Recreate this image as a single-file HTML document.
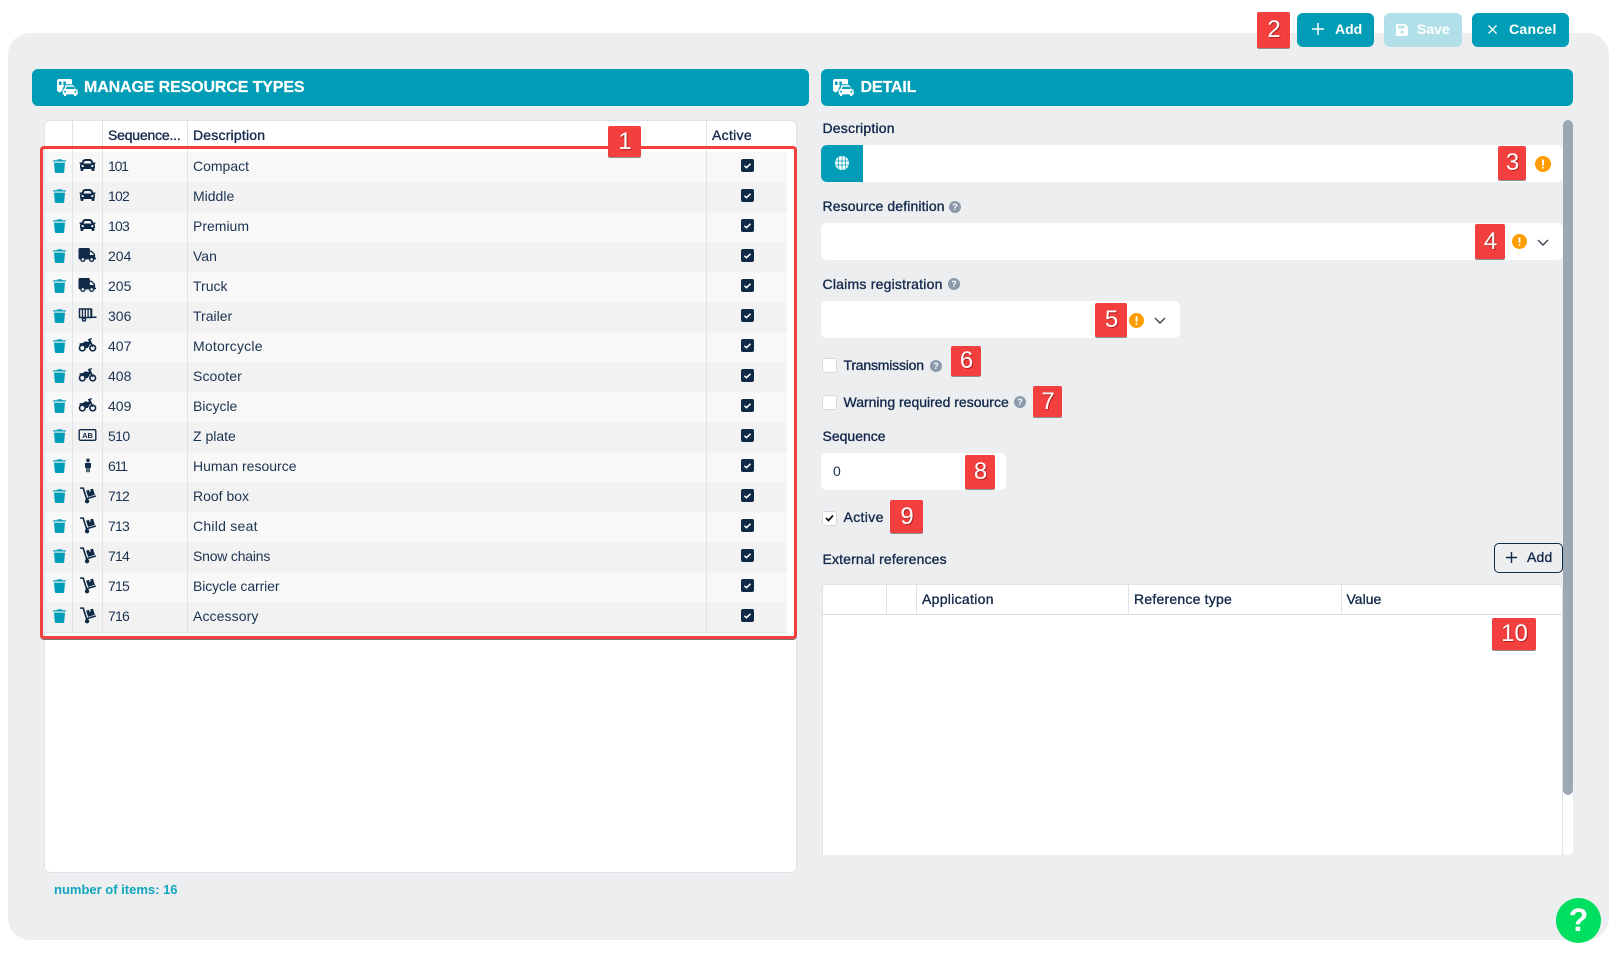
<!DOCTYPE html>
<html lang="en">
<head>
<meta charset="utf-8">
<title>Manage resource types</title>
<style>
*{box-sizing:border-box}
html,body{margin:0;padding:0;width:1618px;height:954px;overflow:hidden;background:#fff;font-family:"Liberation Sans",Arial,sans-serif;color:#13294b}
.a{position:absolute}
.panel{left:8px;top:33px;width:1601px;height:907px;background:#edeef0;border-radius:22px}
.hd{background:#019db7;border-radius:6px;top:69px;height:37px}
.ttl{color:#fff;font-weight:bold;font-size:16px;line-height:20px;top:78px;white-space:nowrap;letter-spacing:-.13px;-webkit-text-stroke:.2px #fff}
.tw{left:44px;top:120px;width:753px;height:753px;background:#fff;border:1px solid #e0e4e8;border-radius:6px}
.sep{width:1px;background:#dfe3e6}
.th{font-size:14px;line-height:20px;top:125px;-webkit-text-stroke:.35px #13294b;white-space:nowrap;color:#13294b}
.rows{left:45px;top:152px;width:742px;border-bottom:1px solid #dfe3e6}
.r{position:relative;height:30px;background:#f8f8f8;font-size:14px;line-height:30px;color:#1c3350}
.r:nth-child(even){background:#f2f2f3}
.r span{position:absolute;top:-1px;white-space:nowrap}
.r .s{left:63px}
.r .d{left:148px}
.r svg{position:absolute}
.r .tr{left:8.300px;top:7px;width:13px;height:14px;color:#049db8}
.r .ck{left:695.500px;top:6.500px;width:13px;height:13px}
.ic{left:34px;width:18px;height:18px;top:5px;color:#0f2a47;transform:translate(-.5px,-1px)}
.lb{font-size:14px;line-height:20px;-webkit-text-stroke:.35px #13294b;white-space:nowrap;color:#13294b}
.in{background:#fff;border-radius:6px}
.b{background:#f43f3f;color:#fff;font-size:24px;line-height:30px;text-align:center;border-radius:2px;box-shadow:0 1px 0 #8f8f8f;text-shadow:1px 1px 0 rgba(90,0,0,.45);display:flex;align-items:center;justify-content:center;padding-left:1px;z-index:5}
.btn{background:#019db7;border-radius:6px;top:13px;height:34px;color:#fff}
.bt{color:#fff;font-weight:bold;font-size:14px;line-height:20px;top:19px;white-space:nowrap}
.cb{width:15px;height:15px;background:#fff;border:1px solid #d5d9de;border-radius:3px;left:822px}
.redbox{left:40px;top:146px;width:757px;height:493px;border:3px solid #f43f3f;border-radius:4px;box-shadow:0 1px 0 #777;z-index:4}
</style>
</head>
<body>
<svg width="0" height="0" style="position:absolute">
<defs>
<symbol id="car" viewBox="0 0 512 512"><path fill="currentColor" d="M499.99 176h-59.87l-16.64-41.6C406.38 91.63 365.57 64 319.5 64h-127c-46.06 0-86.88 27.63-103.99 70.4L71.87 176H12.01C4.2 176-1.53 183.34.37 190.91l6 24C7.7 220.25 12.5 224 18.01 224h20.07C24.65 235.73 16 252.78 16 272v48c0 16.12 6.16 30.67 16 41.93V416c0 17.67 14.33 32 32 32h32c17.67 0 32-14.33 32-32v-32h256v32c0 17.67 14.33 32 32 32h32c17.67 0 32-14.33 32-32v-54.07c9.84-11.25 16-25.8 16-41.93v-48c0-19.22-8.65-36.27-22.07-48H494c5.51 0 10.31-3.75 11.64-9.09l6-24c1.89-7.57-3.84-14.91-11.65-14.91zm-352.06-17.83c7.29-18.22 24.94-30.17 44.57-30.17h127c19.63 0 37.28 11.95 44.57 30.17L384 208H128l19.93-49.83zM96 319.8c-19.2 0-32-12.76-32-31.9S76.8 256 96 256s48 28.71 48 47.85-28.8 15.95-48 15.95zm320 0c-19.2 0-48 3.19-48-15.95S396.8 256 416 256s32 12.76 32 31.9-12.8 31.9-32 31.9z"/></symbol>
<symbol id="truck" viewBox="0 0 640 512"><path fill="currentColor" d="M624 352h-16V243.9c0-12.7-5.1-24.9-14.1-33.9L494 110.1c-9-9-21.2-14.1-33.9-14.1H416V48c0-26.5-21.5-48-48-48H48C21.5 0 0 21.5 0 48v320c0 26.5 21.5 48 48 48h16c0 53 43 96 96 96s96-43 96-96h128c0 53 43 96 96 96s96-43 96-96h48c8.8 0 16-7.2 16-16v-32c0-8.8-7.2-16-16-16zM160 464c-26.5 0-48-21.5-48-48s21.5-48 48-48 48 21.5 48 48-21.5 48-48 48zm320 0c-26.5 0-48-21.5-48-48s21.5-48 48-48 48 21.5 48 48-21.5 48-48 48zm80-208H416V144h44.1l99.9 99.9V256z"/></symbol>
<symbol id="trash" viewBox="0 0 13 14"><path fill="currentColor" d="M4.5.3h4l.5.9h3.2c.4 0 .8.3.8.8v.5H0V2c0-.5.4-.8.8-.8H4zM1 3.6h11l-.8 9.3c-.1.6-.6 1.1-1.2 1.1H3c-.6 0-1.100-.5-1.200-1.100z"/></symbol>
<symbol id="trailer" viewBox="0 0 18 14"><path fill="none" stroke="currentColor" stroke-width="1.500" d="M1 1h11.500v8.500H1z"/><path stroke="currentColor" stroke-width="1.300" d="M4 1v8.500M6.800 1v8.500M9.600 1v8.500"/><path fill="currentColor" d="M12 8.500h6V10h-6zM12 1h1.800v8.500H12z"/><circle cx="5.500" cy="11.500" r="2.300" fill="currentColor"/><circle cx="5.500" cy="11.500" r=".8" fill="#f5f5f5"/></symbol>
<symbol id="moto" viewBox="0 0 18 14"><circle cx="3.800" cy="10" r="2.800" fill="none" stroke="currentColor" stroke-width="1.700"/><circle cx="14.200" cy="10" r="2.800" fill="none" stroke="currentColor" stroke-width="1.700"/><path fill="currentColor" d="M1 5.500l4-.7 1.500-1.400 4 .6L9.300 1h2.300l3.500 7.500-1.500.7-1.700-3.600-2.600 4.400H6.500L7 8 5 6.700 1.200 7.500z"/><path fill="currentColor" d="M10 1l3.200-1 .4 1.200-3.100.8z"/></symbol>
<symbol id="plate" viewBox="0 0 18 12"><rect x=".7" y=".7" width="16.600" height="10.600" rx="1.300" fill="none" stroke="currentColor" stroke-width="1.400"/><text x="9" y="8.800" font-family="Liberation Sans" font-size="7.500" font-weight="bold" text-anchor="middle" fill="currentColor">AB</text></symbol>
<symbol id="person" viewBox="0 0 8 16"><circle cx="4" cy="2" r="2" fill="currentColor"/><path fill="currentColor" d="M1.800 4.800h4.400c.7 0 1.200.5 1.200 1.200v4.500H6v5.200H4.400v-4.700h-.8v4.700H2v-5.200H.6V6c0-.7.5-1.200 1.200-1.200z"/></symbol>
<symbol id="cart" viewBox="0 0 18 18"><path fill="none" stroke="currentColor" stroke-width="1.700" d="M.6 1.200h3.300l3.600 11.200 9.800-2.900"/><circle cx="8" cy="15" r="2.300" fill="currentColor"/><path fill="currentColor" d="M7 3.900l3-.9.700 2.200 1.200-.4-.7-2.200 3-.9 2.100 6.500-7.200 2.200z"/></symbol>
<symbol id="hdr" viewBox="0 0 21 17"><path fill="currentColor" d="M2 0h11.500c1 0 1.500.7 1.500 1.500V6H8L5 12H4.500a2 2 0 0 1-3.800 0H0V2C0 .9.900 0 2 0z"/><path fill="#019db7" d="M2 2.500h2.500v3.500H2zM6.300 2.500h2.500v3.500H6.300z"/><path fill="#019db7" d="M5 16.500V12l2.300-6.800h10L20.500 12v5z"/><path fill="currentColor" d="M8.600 6.300h8L18 10l1.500.4c.5.200 1.200.8 1.200 1.600v3.400h-1.300V17h-2.300v-1.600H9.300V17H7v-1.600H5.700V12c0-.8.700-1.400 1.200-1.600L7.200 10zM9.700 7.800L8.800 10h8.800l-.9-2.200zM8 11.800a1 1 0 1 0 0 2 1 1 0 0 0 0-2zm10.400 0a1 1 0 1 0 0 2 1 1 0 0 0 0-2z"/></symbol>
<symbol id="chk" viewBox="0 0 13 13"><rect width="13" height="13" rx="2" fill="#0f2a47"/><path d="M3.500 6.800l2 1.900 4-3.900" fill="none" stroke="#fff" stroke-width="1.500"/></symbol>
<symbol id="warn" viewBox="0 0 16 16"><circle cx="8" cy="8" r="8" fill="#ff9d00"/><rect x="7" y="3.500" width="2" height="6" rx=".8" fill="#fff"/><rect x="7" y="10.600" width="2" height="2" rx="1" fill="#fff"/></symbol>
<symbol id="help" viewBox="0 0 12 12"><circle cx="6" cy="6" r="6" fill="#8a9aab"/><text x="6" y="9.200" font-family="Liberation Sans" font-size="9" font-weight="bold" text-anchor="middle" fill="#fff">?</text></symbol>
<symbol id="chev" viewBox="0 0 12 7"><path d="M1 1l5 5 5-5" fill="none" stroke="#3c4450" stroke-width="1.400"/></symbol>
</defs>
</svg>

<div class="a panel"></div>

<!-- toolbar -->
<div class="a b" style="left:1257px;top:12px;width:33px;height:36px">2</div>
<div class="a btn" style="left:1297px;width:77px"></div>
<svg class="a" style="left:1312px;top:23px" width="12" height="12" viewBox="0 0 12 12"><path d="M6 0v12M0 6h12" stroke="#fff" stroke-width="1.500"/></svg>
<div class="a bt" style="left:1335px">Add</div>
<div class="a btn" style="left:1384px;width:78px;background:#b2e0e8"></div>
<svg class="a" style="left:1396px;top:24px" width="12" height="12" viewBox="0 0 12 12"><path fill="#fff" d="M1.300 0h8L12 2.700v8c0 .7-.6 1.300-1.300 1.300H1.300C.6 12 0 11.400 0 10.700V1.300C0 .6.600 0 1.300 0zM2 1.800v2.600h6.500V1.800z"/><circle cx="6" cy="8" r="1.600" fill="#b2e0e8"/></svg>
<div class="a bt" style="left:1417px">Save</div>
<div class="a btn" style="left:1472px;width:97px"></div>
<svg class="a" style="left:1488px;top:25px" width="9" height="9" viewBox="0 0 9 9"><path d="M.5.500l8 8M8.500.500l-8 8" stroke="#fff" stroke-width="1.300"/></svg>
<div class="a bt" style="left:1509px;letter-spacing:.3px">Cancel</div>

<!-- headers -->
<div class="a hd" style="left:32px;width:777px"></div>
<svg class="a" style="left:57px;top:79px;color:#fff" width="21" height="17"><use href="#hdr"/></svg>
<div class="a ttl" style="left:84px">MANAGE RESOURCE TYPES</div>
<div class="a hd" style="left:821px;width:752px"></div>
<svg class="a" style="left:833px;top:79px;color:#fff" width="21" height="17"><use href="#hdr"/></svg>
<div class="a ttl" style="left:860.500px">DETAIL</div>

<!-- left table -->
<div class="a tw"></div>
<div class="a th" style="left:108px;letter-spacing:-.2px">Sequence...</div>
<div class="a th" style="left:193px;letter-spacing:.2px">Description</div>
<div class="a th" style="left:712px;letter-spacing:.3px">Active</div>
<div class="a rows">
<div class="r"><svg class="tr"><use href="#trash"/></svg><svg class="ic" style="top:5.500px;left:34.500px;width:16px;height:16px"><use href="#car"/></svg><span class="s" style="letter-spacing:-1.200px">101</span><span class="d">Compact</span><svg class="ck"><use href="#chk"/></svg></div>
<div class="r"><svg class="tr"><use href="#trash"/></svg><svg class="ic" style="top:5.500px;left:34.500px;width:16px;height:16px"><use href="#car"/></svg><span class="s" style="letter-spacing:-.8px">102</span><span class="d">Middle</span><svg class="ck"><use href="#chk"/></svg></div>
<div class="r"><svg class="tr"><use href="#trash"/></svg><svg class="ic" style="top:5.500px;left:34.500px;width:16px;height:16px"><use href="#car"/></svg><span class="s" style="letter-spacing:-.8px">103</span><span class="d">Premium</span><svg class="ck"><use href="#chk"/></svg></div>
<div class="r"><svg class="tr"><use href="#trash"/></svg><svg class="ic" style="top:6.500px;left:34px;width:17.500px;height:14px"><use href="#truck"/></svg><span class="s">204</span><span class="d">Van</span><svg class="ck"><use href="#chk"/></svg></div>
<div class="r"><svg class="tr"><use href="#trash"/></svg><svg class="ic" style="top:6.500px;left:34px;width:17.500px;height:14px"><use href="#truck"/></svg><span class="s">205</span><span class="d">Truck</span><svg class="ck"><use href="#chk"/></svg></div>
<div class="r"><svg class="tr"><use href="#trash"/></svg><svg class="ic" style="top:7px;left:34px;width:18px;height:14px"><use href="#trailer"/></svg><span class="s">306</span><span class="d">Trailer</span><svg class="ck"><use href="#chk"/></svg></div>
<div class="r"><svg class="tr"><use href="#trash"/></svg><svg class="ic" style="top:7px;left:34px;width:18px;height:14px"><use href="#moto"/></svg><span class="s">407</span><span class="d" style="letter-spacing:.2px">Motorcycle</span><svg class="ck"><use href="#chk"/></svg></div>
<div class="r"><svg class="tr"><use href="#trash"/></svg><svg class="ic" style="top:7px;left:34px;width:18px;height:14px"><use href="#moto"/></svg><span class="s">408</span><span class="d" style="letter-spacing:.1px">Scooter</span><svg class="ck"><use href="#chk"/></svg></div>
<div class="r"><svg class="tr"><use href="#trash"/></svg><svg class="ic" style="top:7px;left:34px;width:18px;height:14px"><use href="#moto"/></svg><span class="s">409</span><span class="d">Bicycle</span><svg class="ck"><use href="#chk"/></svg></div>
<div class="r"><svg class="tr"><use href="#trash"/></svg><svg class="ic" style="top:8px;left:34px;width:18px;height:12px"><use href="#plate"/></svg><span class="s" style="letter-spacing:-.6px">510</span><span class="d">Z plate</span><svg class="ck"><use href="#chk"/></svg></div>
<div class="r"><svg class="tr"><use href="#trash"/></svg><svg class="ic" style="top:6.500px;left:39.500px;width:7px;height:15px"><use href="#person"/></svg><span class="s" style="letter-spacing:-1.200px">611</span><span class="d">Human resource</span><svg class="ck"><use href="#chk"/></svg></div>
<div class="r"><svg class="tr"><use href="#trash"/></svg><svg class="ic" style="top:5.500px;left:34.500px;width:17px;height:17px"><use href="#cart"/></svg><span class="s" style="letter-spacing:-.8px">712</span><span class="d">Roof box</span><svg class="ck"><use href="#chk"/></svg></div>
<div class="r"><svg class="tr"><use href="#trash"/></svg><svg class="ic" style="top:5.500px;left:34.500px;width:17px;height:17px"><use href="#cart"/></svg><span class="s" style="letter-spacing:-.8px">713</span><span class="d" style="letter-spacing:.25px">Child seat</span><svg class="ck"><use href="#chk"/></svg></div>
<div class="r"><svg class="tr"><use href="#trash"/></svg><svg class="ic" style="top:5.500px;left:34.500px;width:17px;height:17px"><use href="#cart"/></svg><span class="s" style="letter-spacing:-.8px">714</span><span class="d" style="letter-spacing:-.2px">Snow chains</span><svg class="ck"><use href="#chk"/></svg></div>
<div class="r"><svg class="tr"><use href="#trash"/></svg><svg class="ic" style="top:5.500px;left:34.500px;width:17px;height:17px"><use href="#cart"/></svg><span class="s" style="letter-spacing:-.8px">715</span><span class="d" style="letter-spacing:-.1px">Bicycle carrier</span><svg class="ck"><use href="#chk"/></svg></div>
<div class="r"><svg class="tr"><use href="#trash"/></svg><svg class="ic" style="top:5.500px;left:34.500px;width:17px;height:17px"><use href="#cart"/></svg><span class="s" style="letter-spacing:-.8px">716</span><span class="d" style="letter-spacing:.1px">Accessory</span><svg class="ck"><use href="#chk"/></svg></div>
</div>
<div class="a sep" style="left:72px;top:121px;height:511px"></div>
<div class="a sep" style="left:102px;top:121px;height:511px"></div>
<div class="a sep" style="left:187px;top:121px;height:511px"></div>
<div class="a sep" style="left:706px;top:121px;height:511px"></div>
<div class="a redbox"></div>
<div class="a b" style="left:608px;top:126px;width:33px;height:31px">1</div>
<div class="a" style="left:54px;top:880px;font-size:13px;line-height:20px;font-weight:bold;color:#0ea5bd;white-space:nowrap">number of items: 16</div>

<!-- detail -->
<div class="a lb" style="left:822.500px;top:118px;letter-spacing:.2px">Description</div>
<div class="a in" style="left:821px;top:145px;width:742px;height:37px"></div>
<div class="a" style="left:821px;top:145px;width:42px;height:37px;background:#019db7;border-radius:6px 0 0 6px"></div>
<svg class="a" style="left:835px;top:156px" width="14" height="14" viewBox="0 0 14 14"><circle cx="7" cy="7" r="7" fill="#fff"/><path d="M0 5h14M0 9h14M7 0v14M4 1q-1.500 6 0 12M10 1q1.500 6 0 12" fill="none" stroke="#019db7" stroke-width=".7"/></svg>
<div class="a b" style="left:1498px;top:146px;width:28px;height:34px">3</div>
<svg class="a" style="left:1535px;top:156px" width="16" height="16"><use href="#warn"/></svg>

<div class="a lb" style="left:822.500px;top:196px;letter-spacing:.12px">Resource definition</div>
<svg class="a" style="left:949px;top:201px" width="12" height="12"><use href="#help"/></svg>
<div class="a in" style="left:821px;top:223px;width:742px;height:37px"></div>
<div class="a b" style="left:1475px;top:224px;width:30px;height:35px">4</div>
<svg class="a" style="left:1511.500px;top:234px" width="15" height="15"><use href="#warn"/></svg>
<svg class="a" style="left:1537px;top:239px" width="12" height="7"><use href="#chev"/></svg>

<div class="a lb" style="left:822.500px;top:274px;letter-spacing:.22px">Claims registration</div>
<svg class="a" style="left:948px;top:278px" width="12" height="12"><use href="#help"/></svg>
<div class="a in" style="left:821px;top:301px;width:359px;height:37px"></div>
<div class="a b" style="left:1095px;top:303px;width:32px;height:34px">5</div>
<svg class="a" style="left:1129px;top:312.500px" width="15" height="15"><use href="#warn"/></svg>
<svg class="a" style="left:1154px;top:317px" width="12" height="7"><use href="#chev"/></svg>

<div class="a cb" style="top:358px"></div>
<div class="a lb" style="left:843.500px;top:355px;letter-spacing:-.2px">Transmission</div>
<svg class="a" style="left:930px;top:360px" width="12" height="12"><use href="#help"/></svg>
<div class="a b" style="left:951px;top:346px;width:30px;height:30px">6</div>

<div class="a cb" style="top:395px"></div>
<div class="a lb" style="left:843.500px;top:392px">Warning required resource</div>
<svg class="a" style="left:1014px;top:396px" width="12" height="12"><use href="#help"/></svg>
<div class="a b" style="left:1033px;top:386px;width:29px;height:31px">7</div>

<div class="a lb" style="left:822.500px;top:426px">Sequence</div>
<div class="a in" style="left:821px;top:453px;width:185px;height:37px"></div>
<div class="a" style="left:833px;top:461px;font-size:14px;line-height:20px;color:#1c3350">0</div>
<div class="a b" style="left:965px;top:455px;width:30px;height:34px">8</div>

<div class="a cb" style="top:510.500px"></div>
<svg class="a" style="left:825px;top:514px" width="9" height="8" viewBox="0 0 9 8"><path d="M1 4l2.500 2.500L8 1.500" fill="none" stroke="#111" stroke-width="1.700"/></svg>
<div class="a lb" style="left:843.500px;top:507px;letter-spacing:.35px">Active</div>
<div class="a b" style="left:890px;top:500px;width:33px;height:33px">9</div>

<div class="a lb" style="left:822.500px;top:549px;letter-spacing:.15px">External references</div>
<div class="a" style="left:1494px;top:543px;width:69px;height:30px;border:1px solid #0f2a47;border-radius:5px"></div>
<svg class="a" style="left:1506px;top:552px" width="11" height="11" viewBox="0 0 11 11"><path d="M5.500 0v11M0 5.500h11" stroke="#0f2a47" stroke-width="1.400"/></svg>
<div class="a lb" style="left:1527px;top:547px;letter-spacing:.2px">Add</div>

<div class="a" style="left:822px;top:584px;width:741px;height:271px;background:#fff;border:1px solid #e0e4e8;border-bottom:0;border-radius:5px 5px 0 0"></div>
<div class="a" style="left:823px;top:614px;width:739px;height:1px;background:#d8dce0"></div>
<div class="a sep" style="left:886px;top:585px;height:29px"></div>
<div class="a sep" style="left:916px;top:585px;height:29px"></div>
<div class="a sep" style="left:1128px;top:585px;height:29px"></div>
<div class="a sep" style="left:1341px;top:585px;height:29px"></div>
<div class="a lb" style="left:922px;top:589px;letter-spacing:.3px">Application</div>
<div class="a lb" style="left:1134px;top:589px;letter-spacing:.22px">Reference type</div>
<div class="a lb" style="left:1346.500px;top:589px">Value</div>
<div class="a b" style="left:1492px;top:618px;width:44px;height:32px">10</div>

<!-- scrollbar -->
<div class="a" style="left:1563px;top:120px;width:10px;height:735px;background:#fff;border-radius:5px"></div>
<div class="a" style="left:1563px;top:120px;width:10px;height:675px;background:#9ca8b3;border-radius:5px"></div>

<!-- help -->
<div class="a" style="left:1556px;top:898px;width:45px;height:45px;border-radius:50%;background:#00e060;color:#fff;font-weight:bold;font-size:32px;line-height:45px;text-align:center;z-index:6">?</div>
</body>
</html>
